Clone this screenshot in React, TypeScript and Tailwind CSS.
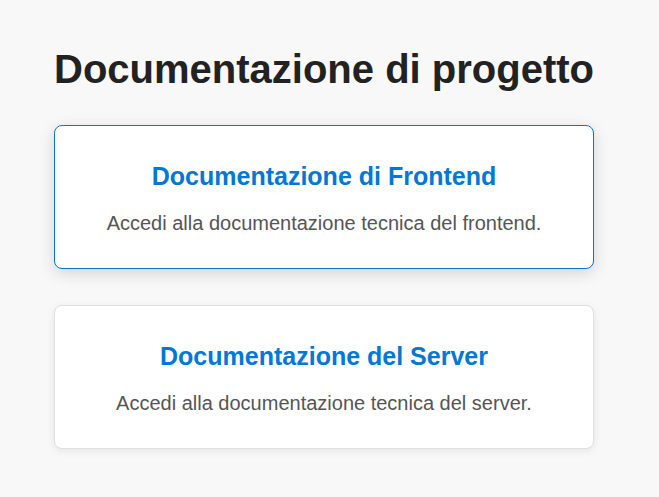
const docs = [
  {
    title: "Documentazione di Frontend",
    text: "Accedi alla documentazione tecnica del frontend.",
    active: true,
  },
  {
    title: "Documentazione del Server",
    text: "Accedi alla documentazione tecnica del server.",
    active: false,
  },
];

export default function App() {
  return (
    <div className="min-h-[497px] w-full bg-[#f8f8f8] font-['Liberation_Sans',Arial,sans-serif]">
      <div className="ml-[54px] w-[540px] pt-[46px]">
        <h1 className="text-[40px] font-bold leading-[46px] text-[#222222]">
          Documentazione di progetto
        </h1>
        <div className="mt-[33px] flex flex-col gap-[36px]">
          {docs.map((d) => (
            <a
              key={d.title}
              href="#"
              className={
                d.active
                  ? "block rounded-[8px] border border-[#0078d4] bg-white px-5 pt-[35px] pb-[33px] text-center shadow-[0_4px_16px_rgba(0,0,0,0.15)]"
                  : "block rounded-[8px] border border-[#e0e0e0] bg-white px-5 pt-[35px] pb-[33px] text-center shadow-[0_2px_8px_rgba(0,0,0,0.08)]"
              }
            >
              <h2 className="text-[25px] font-bold leading-[30px] text-[#0078d4]">
                {d.title}
              </h2>
              <p className="mt-[20px] text-[20px] leading-[24px] text-[#555555]">
                {d.text}
              </p>
            </a>
          ))}
        </div>
      </div>
    </div>
  );
}
